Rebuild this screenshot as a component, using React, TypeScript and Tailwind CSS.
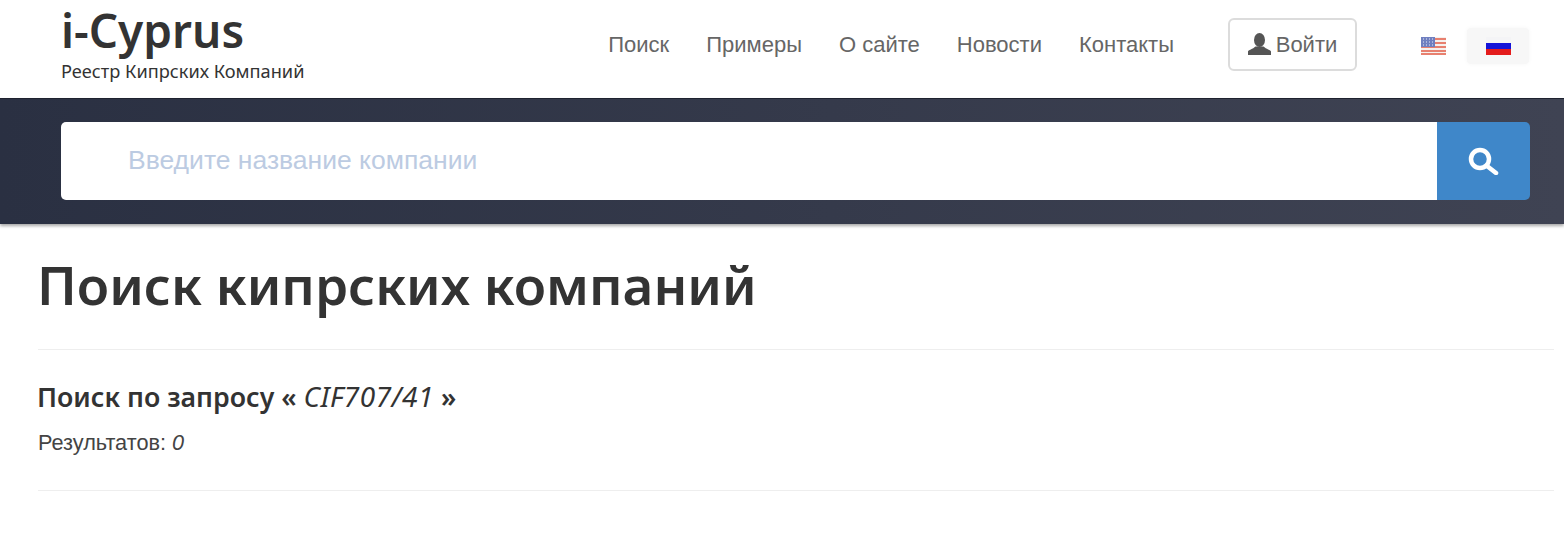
const navItems = ['Поиск', 'Примеры', 'О сайте', 'Новости', 'Контакты']

const heading = { fontFamily: '"Noto Sans", sans-serif' }

function FlagUs() {
  return (
    <svg width="25" height="18" viewBox="0 0 25 18">
      <rect width="25" height="18" fill="#f6f1ee" />
      <path d="M0 1h25v2H0zM0 5h25v2H0zM0 9h25v2H0zM0 13h25v2H0zM0 16h25v2H0z" fill="#e8806f" />
      <rect width="14" height="10" fill="#6f7fc0" />
      <path d="M2 2h1M5 2h1M8 2h1M11 2h1M2 5h1M5 5h1M8 5h1M11 5h1M2 8h1M5 8h1M8 8h1M11 8h1" stroke="#e6eaf6" />
    </svg>
  )
}

function FlagRu() {
  return (
    <svg width="25" height="18" viewBox="0 0 25 18">
      <rect width="25" height="6" fill="#f4f4f6" />
      <rect y="6" width="25" height="6" fill="#1414d8" />
      <rect y="12" width="25" height="6" fill="#e41c1c" />
    </svg>
  )
}

function UserIcon() {
  return (
    <svg width="23" height="23" viewBox="0 0 23 23" fill="#555">
      <ellipse cx="11.5" cy="7" rx="5.500" ry="7" />
      <path d="M0 22v-3.500c0-1.500 5-2.500 7.500-5h8c2.500 2.500 7.500 3.500 7.500 5V22z" />
    </svg>
  )
}

function SearchIcon() {
  return (
    <svg width="31" height="28" viewBox="0 0 31 28" fill="none" stroke="#fff" strokeWidth="4.500" strokeLinecap="round">
      <circle cx="12" cy="12" r="9" />
      <path d="M19 19l9 7" />
    </svg>
  )
}

export default function App() {
  return (
    <div className="min-h-[557px] bg-white font-['Liberation_Sans',sans-serif] text-[#333]">
      <header className="flex h-[99px] items-center justify-between border-b border-[#1f2330] pb-[10px] pl-[61px] pr-[35px]">
        <div className="self-start pt-[6px]" style={heading}>
          <div className="text-[46px] font-semibold leading-[48px] text-[#333]">i-Cyprus</div>
          <div className="mt-[5px] text-[18.200px] leading-[24px] text-[#333]">Реестр Кипрских Компаний</div>
        </div>

        <div className="flex items-center">
          <nav className="flex items-center gap-[37px] text-[22px] text-[#666]">
            {navItems.map((item) => (
              <a key={item} href="#">
                {item}
              </a>
            ))}
          </nav>

          <button className="ml-[54px] flex h-[53px] w-[129px] items-center justify-center gap-[5px] rounded-[6px] border-2 border-[#dcdcdc] text-[22px] text-[#666]">
            <UserIcon />
            Войти
          </button>

          <div className="ml-[52px] mt-[4px] flex items-center">
            <a href="#" className="flex h-[36px] w-[48px] items-center justify-center">
              <FlagUs />
            </a>
            <a href="#" className="ml-[10px] flex h-[36px] w-[62px] items-center justify-center rounded-[4px] bg-[#f7f7f7] shadow-[0_0_4px_#f6f6f6]">
              <FlagRu />
            </a>
          </div>
        </div>
      </header>

      <section className="h-[125px] bg-gradient-to-r from-[#2a3042] to-[#3f4353] pl-[61px] pr-[34px] pt-[23px] shadow-[0_2px_3px_rgba(0,0,0,0.35)]">
        <div className="flex h-[78px]">
          <input
            readOnly
            placeholder="Введите название компании"
            className="min-w-0 flex-1 rounded-l-[5px] bg-white pl-[67px] text-[26.500px] outline-none placeholder:text-[#bccbe2]"
          />
          <button className="flex w-[93px] items-center justify-center rounded-r-[5px] bg-[#3f87c9]">
            <SearchIcon />
          </button>
        </div>
      </section>

      <main className="pl-[38px] pr-[10px]">
        <h1 className="-ml-px mt-[29px] text-[53px] font-semibold leading-[64px] text-[#333]" style={heading}>
          Поиск кипрских компаний
        </h1>
        <hr className="mt-[32px] border-[#eeeeee]" />
        <h3 className="-ml-px mt-[28px] text-[26.700px] font-semibold leading-[36px] text-[#333]" style={heading}>
          Поиск по запросу « <em className="text-[28px] font-normal tracking-[0.5px]">CIF707/41</em> »
        </h3>
        <p className="mt-[13px] text-[21.700px] leading-[30px] text-[#444]">
          Результатов: <em>0</em>
        </p>
        <hr className="mt-[32px] border-[#eeeeee]" />
      </main>
    </div>
  )
}
